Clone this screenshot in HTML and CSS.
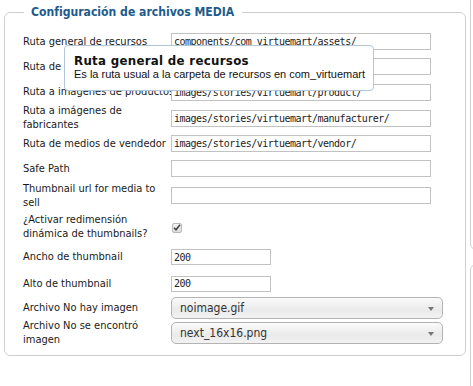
FILE: index.html
```html
<!DOCTYPE html>
<html lang="es">
  <head>
    <meta charset="UTF-8" />
    <title>Configuración de archivos MEDIA</title>
    <link rel="stylesheet" href="styles.css">
  </head>
  <body>
    <div class="layout">
      <fieldset class="media-box">
        <legend>Configuración de archivos MEDIA</legend>

        <div class="row h25">
          <label class="one-line">Ruta general de recursos</label>
          <input class="field" type="text" value="components/com_virtuemart/assets/">
        </div>
        <div class="row h25">
          <label class="one-line">Ruta de imágenes de categorías</label>
          <input class="field" type="text" value="images/stories/virtuemart/category/">
        </div>
        <div class="row h26">
          <label class="one-line">Ruta a imágenes de productos</label>
          <input class="field" type="text" value="images/stories/virtuemart/product/">
        </div>
        <div class="row h26">
          <label>Ruta a imágenes de fabricantes</label>
          <input class="field" type="text" value="images/stories/virtuemart/manufacturer/">
        </div>
        <div class="row h25">
          <label class="one-line">Ruta de medios de vendedor</label>
          <input class="field" type="text" value="images/stories/virtuemart/vendor/">
        </div>
        <div class="row h25">
          <label>Safe Path</label>
          <input class="field" type="text" value="">
        </div>
        <div class="row h29">
          <label>Thumbnail url for media to sell</label>
          <input class="field" type="text" value="">
        </div>
        <div class="row h33">
          <label>¿Activar redimensión dinámica de thumbnails?</label>
          <span class="check">
            <svg width="8" height="7" viewBox="0 0 8 7"><path d="M1 3.8 L3 5.8 L7 0.8" fill="none" stroke="#444" stroke-width="1.6"/></svg>
          </span>
        </div>
        <div class="row h28">
          <label>Ancho de thumbnail</label>
          <input class="field small" type="text" value="200">
        </div>
        <div class="row h25">
          <label>Alto de thumbnail</label>
          <input class="field small" type="text" value="200">
        </div>
        <div class="row h24">
          <label>Archivo No hay imagen</label>
          <div class="select">noimage.gif<span class="arrow"></span></div>
        </div>
        <div class="row h25">
          <label>Archivo No se encontró imagen</label>
          <div class="select">next_16x16.png<span class="arrow"></span></div>
        </div>

        <div class="tooltip">
          <strong>Ruta general de recursos</strong>
          <span>Es la ruta usual a la carpeta de recursos en com_virtuemart</span>
        </div>
      </fieldset>

      <div class="side">
        <div class="side-box top"></div>
        <div class="side-box bottom"></div>
      </div>
    </div>
  </body>
</html>
```

FILE: styles.css
```css
* {
  box-sizing: border-box;
}

body {
  margin: 0;
  background: #fff;
  color: #1a1a1a;
  font-family: "DejaVu Sans Condensed", "DejaVu Sans", sans-serif;
  font-size: 11px;
  overflow: hidden;
}

.layout {
  display: flex;
  align-items: flex-start;
  height: 386px;
  overflow: hidden;
}

.media-box {
  position: relative;
  flex: none;
  width: 462px;
  margin: 5px 0 0 4px;
  padding: 10px 0 10px 18px;
  border: 1px solid #cfcfcf;
  border-radius: 6px;
  min-width: 0;
}

.media-box legend {
  margin-left: 1px;
  padding: 0 8px 0 7px;
  color: #1d5b8c;
  font-size: 12.1px;
  font-weight: bold;
  line-height: 14px;
}

.row {
  display: flex;
  align-items: center;
}

.h24 { height: 24px; }
.h25 { height: 25px; }
.h26 { height: 26px; }
.h28 { height: 28px; }
.h29 { height: 29px; }
.h33 { height: 33px; }

.row label {
  width: 148px;
  flex: none;
  line-height: 14px;
  padding-right: 4px;
}

.row label.one-line {
  white-space: nowrap;
}

.field {
  width: 260px;
  height: 17px;
  margin: 0;
  padding: 0 2px;
  border: 1px solid #c2c2c2;
  border-radius: 0;
  background: #fff;
  color: #222;
  font-family: "DejaVu Sans Mono", monospace;
  font-size: 10px;
  line-height: 15px;
  letter-spacing: -0.5px;
  outline: none;
}

.field.small {
  width: 100px;
  height: 16px;
}

.check {
  display: flex;
  align-items: center;
  justify-content: center;
  width: 10px;
  height: 10px;
  margin: 2px 0 0 1px;
  border: 1px solid #b8b8b8;
  border-radius: 2px;
  background: linear-gradient(#f4f4f4, #dcdcdc);
}

.select {
  position: relative;
  width: 272px;
  height: 22px;
  padding: 0 0 0 8px;
  border: 1px solid #b3b3b3;
  border-radius: 5px;
  background: linear-gradient(#fafafa, #eaeaea 60%, #f2f2f2);
  line-height: 20px;
  font-size: 12px;
  color: #333;
}

.arrow {
  position: absolute;
  right: 8px;
  top: 9px;
  border-left: 3.5px solid transparent;
  border-right: 3.5px solid transparent;
  border-top: 4px solid #777;
}

.tooltip {
  position: absolute;
  left: 59px;
  top: 26px;
  width: 310px;
  height: 46px;
  padding: 9px 9px 0;
  background: #fff;
  border: 1px solid #b2c6da;
  border-radius: 4px;
  display: flex;
  flex-direction: column;
  font-family: "Liberation Sans", Arial, sans-serif;
  font-size: 11px;
  line-height: 13px;
  white-space: nowrap;
  color: #111;
}

.tooltip strong {
  font-family: "DejaVu Sans", sans-serif;
  font-size: 11.8px;
  font-weight: bold;
  letter-spacing: 0.3px;
  line-height: 13px;
}

.side {
  display: flex;
  flex-direction: column;
  gap: 14px;
  margin-left: 4px;
  width: 20px;
  flex: none;
}

.side-box {
  border: 1px solid #cfcfcf;
  border-radius: 6px;
}

.side-box.top {
  height: 256px;
  margin-top: -6px;
}

.side-box.bottom {
  height: 200px;
}
```
